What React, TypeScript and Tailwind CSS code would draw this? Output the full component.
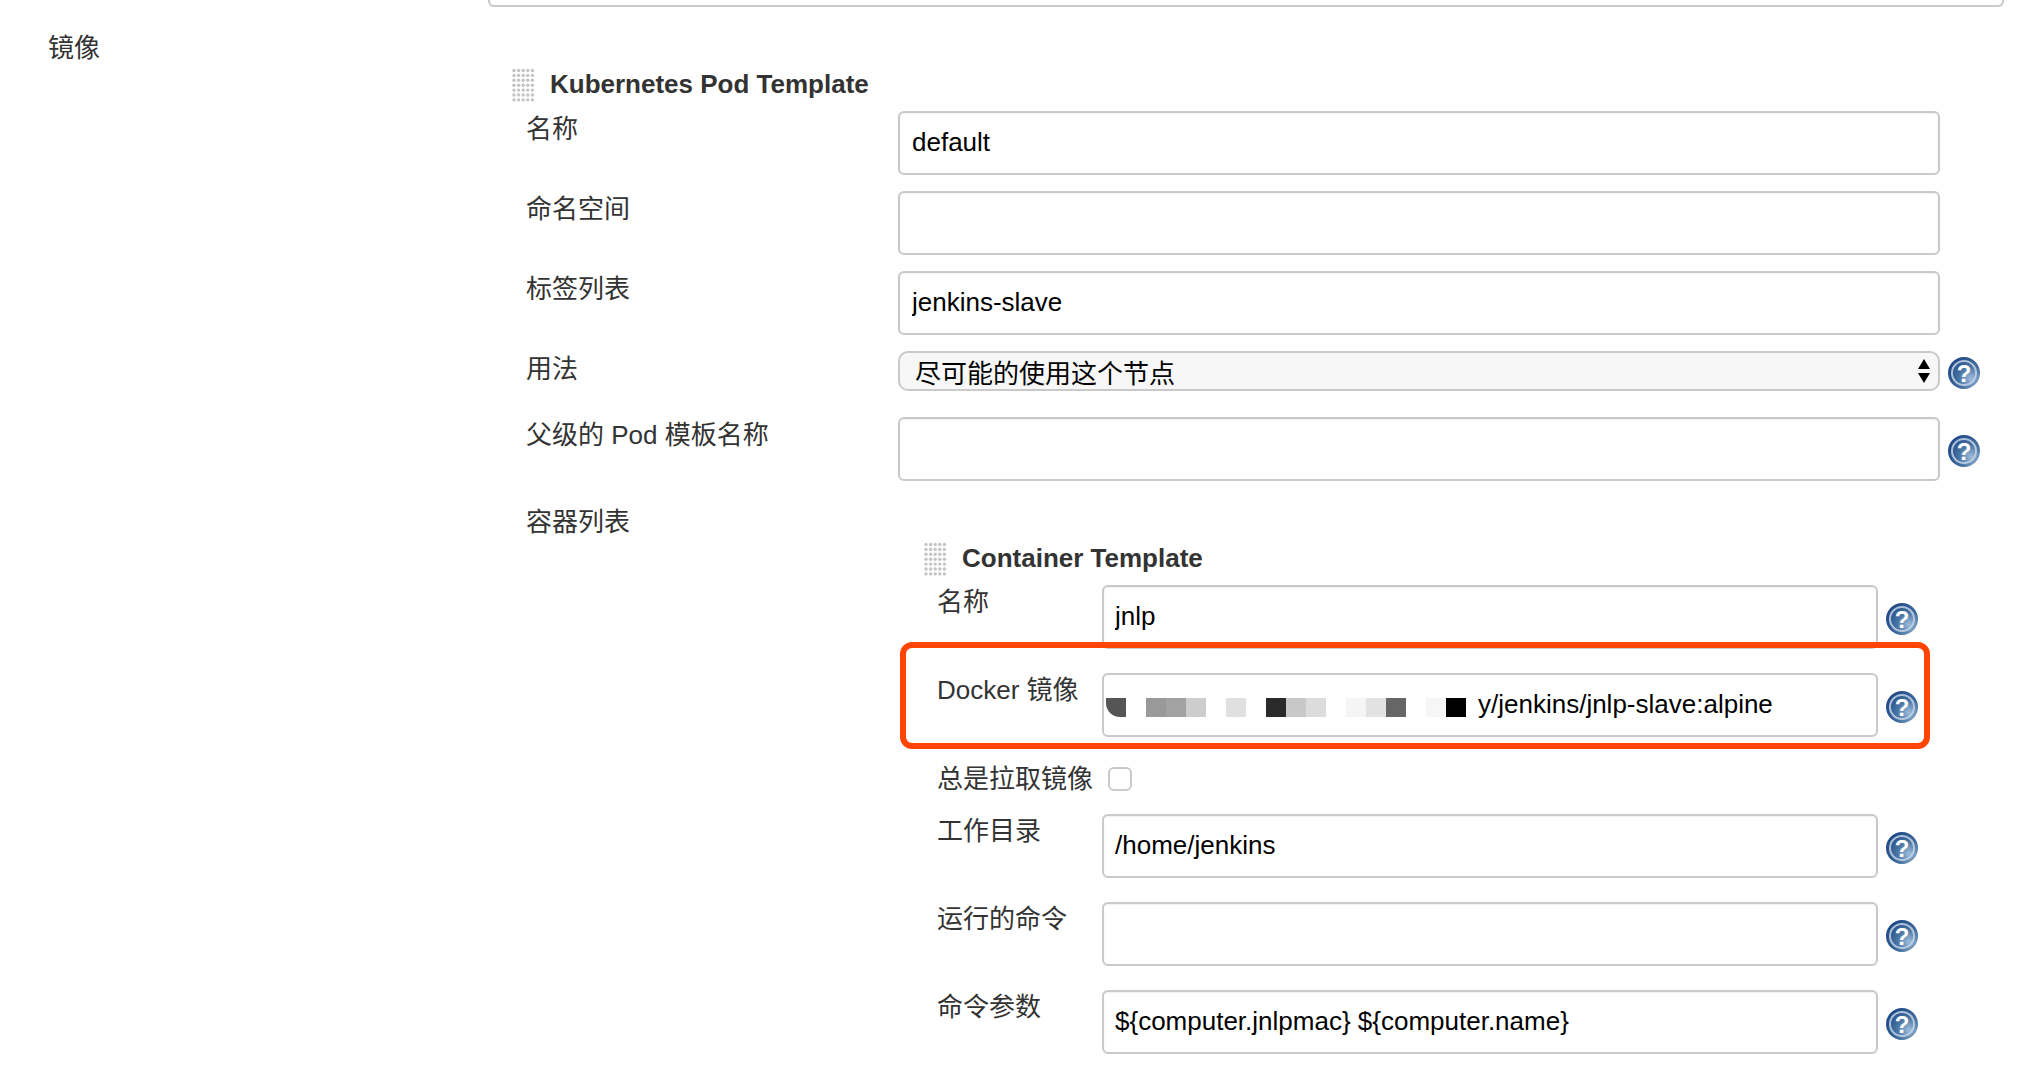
const sans = 'font-["Liberation_Sans","Noto_Sans_CJK_SC",sans-serif]';

function HelpIcon() {
  return (
    <svg width="32" height="32" viewBox="0 0 32 32" className="shrink-0">
      <defs>
        <radialGradient id="helpBg" cx="0.72" cy="0.68" r="0.8">
          <stop offset="0" stopColor="#9dbbdc" />
          <stop offset="0.5" stopColor="#44709f" />
          <stop offset="1" stopColor="#1d4584" />
        </radialGradient>
      </defs>
      <circle cx="16" cy="16" r="16" fill="url(#helpBg)" />
      <circle cx="16" cy="16" r="12" fill="none" stroke="#c3d3e6" strokeWidth="2" opacity="0.85" />
      <text x="16" y="24.5" textAnchor="middle" fontSize="24" fontWeight="700" fill="#ffffff" fontFamily="Liberation Sans">?</text>
    </svg>
  );
}

function Grip() {
  const dots = [];
  for (let r = 0; r < 7; r++) {
    for (let c = 0; c < 5; c++) {
      dots.push(<circle key={r + '-' + c} cx={2 + c * 4.6} cy={2.5 + r * 4.9} r="1.7" fill="#c4c4c4" />);
    }
  }
  return (
    <svg width="23" height="35" viewBox="0 0 23 35" className="shrink-0">
      {dots}
    </svg>
  );
}

function Field({ value, small }: { value?: string; small?: boolean }) {
  return (
    <input
      readOnly
      defaultValue={value}
      className={`${small ? 'w-[776px] px-[11px]' : 'w-[1042px] px-3'} h-[64px] pb-[2px] border-2 border-[#c9c9c9] rounded-md bg-white text-[26px] text-black outline-none shadow-[inset_0_1px_2px_rgba(0,0,0,0.06)] ${sans}`}
    />
  );
}

function Row({ label, labelW, children, help }: { label: string; labelW: string; children: React.ReactNode; help?: boolean }) {
  return (
    <div className="flex items-start">
      <div className={`${labelW} leading-[36px] text-[26px] text-[#333]`}>{label}</div>
      {children}
      {help && <div className="ml-2 mt-[4px] self-center"><HelpIcon /></div>}
    </div>
  );
}

const blocks = [
  'bg-[#555] rounded-bl-[14px]',
  'bg-transparent',
  'bg-[#999]',
  'bg-[#a2a2a2]',
  'bg-[#cdcdcd]',
  'bg-transparent',
  'bg-[#e0e0e0]',
  'bg-transparent',
  'bg-[#2a2a2a]',
  'bg-[#c8c8c8]',
  'bg-[#dcdcdc]',
  'bg-transparent',
  'bg-[#f5f5f5]',
  'bg-[#e2e2e2]',
  'bg-[#666]',
  'bg-transparent',
  'bg-[#f6f6f6]',
  'bg-black',
];

export default function App() {
  return (
    <div className={`relative w-[2028px] h-[1066px] overflow-hidden bg-white ${sans}`}>
      <div className="ml-[488px] w-[1516px] h-[7px] border-2 border-t-0 border-[#c9c9c9] rounded-b-md" />

      <div className="flex">
        <div className="w-[512px] pl-[48px] pt-[24px] text-[26px] leading-[34px] text-[#333] shrink-0">镜像</div>

        <div className="pt-[61px]">
          <div className="flex items-center gap-[15px] h-[35px]">
            <Grip />
            <div className="text-[26px] font-bold text-[#333] -mt-[2px]">Kubernetes Pod Template</div>
          </div>

          <div className="pl-[14px] mt-[8px] flex flex-col">
            <Row label="名称" labelW="w-[372px]"><Field value="default" /></Row>
            <div className="mt-4"><Row label="命名空间" labelW="w-[372px]"><Field /></Row></div>
            <div className="mt-4"><Row label="标签列表" labelW="w-[372px]"><Field value="jenkins-slave" /></Row></div>
            <div className="mt-4">
              <Row label="用法" labelW="w-[372px]" help>
                <div className="w-[1042px] h-[40px] border-2 border-[#c9c9c9] rounded-[10px] bg-[#f7f7f7] flex items-center justify-between pl-[15px] pr-[8px] text-[26px] text-black">
                  <span className="mt-[7px]">尽可能的使用这个节点</span>
                  <svg width="12" height="26" viewBox="0 0 12 26">
                    <path d="M6 1 L12 11 L0 11 Z M0 15 L12 15 L6 25 Z" fill="#000" />
                  </svg>
                </div>
              </Row>
            </div>
            <div className="mt-[26px]"><Row label="父级的 Pod 模板名称" labelW="w-[372px]" help><Field /></Row></div>

            <div className="mt-[23px] flex items-start">
              <div className="w-[372px] leading-[36px] text-[26px] text-[#333]">容器列表</div>
              <div className="pt-[38px] ml-[26px]">
                <div className="flex items-center gap-[15px] h-[35px]">
                  <Grip />
                  <div className="text-[26px] font-bold text-[#333] -mt-[2px]">Container Template</div>
                </div>

                <div className="pl-[13px] mt-[8px] flex flex-col gap-6">
                  <Row label="名称" labelW="w-[165px] -mt-[1px]" help><Field value="jnlp" small /></Row>
                  <Row label="Docker 镜像" labelW="w-[165px] -mt-[1px]" help>
                    <div className="w-[776px] h-[64px] border-2 border-[#c9c9c9] rounded-md bg-white flex items-center pl-[2px] pb-[2px] text-[26px] text-black">
                      <div className="flex h-[19px] mt-[7px]">
                        {blocks.map((c, i) => <div key={i} className={`w-[20px] ${c}`} />)}
                      </div>
                      <span className="ml-[12px]">y/jenkins/jnlp-slave:alpine</span>
                    </div>
                  </Row>
                  <div className="flex items-center mt-[3px] -mb-[4px] h-[30px]">
                    <div className="w-[171px] text-[26px] leading-[34px] text-[#333] shrink-0">总是拉取镜像</div>
                    <div className="w-[24px] h-[24px] border-2 border-[#c9c9c9] rounded-md bg-white" />
                  </div>
                  <Row label="工作目录" labelW="w-[165px] -mt-[1px]" help><Field value="/home/jenkins" small /></Row>
                  <Row label="运行的命令" labelW="w-[165px] -mt-[1px]" help><Field small /></Row>
                  <Row label="命令参数" labelW="w-[165px] -mt-[1px]" help><Field value="${computer.jnlpmac} ${computer.name}" small /></Row>
                </div>
              </div>
            </div>
          </div>
        </div>
      </div>

      {/* red highlight drawn over the Docker row */}
      <div className="absolute left-[900px] top-[642px] w-[1030px] h-[107px] border-[6px] border-[#ff4500] rounded-xl" />
    </div>
  );
}
